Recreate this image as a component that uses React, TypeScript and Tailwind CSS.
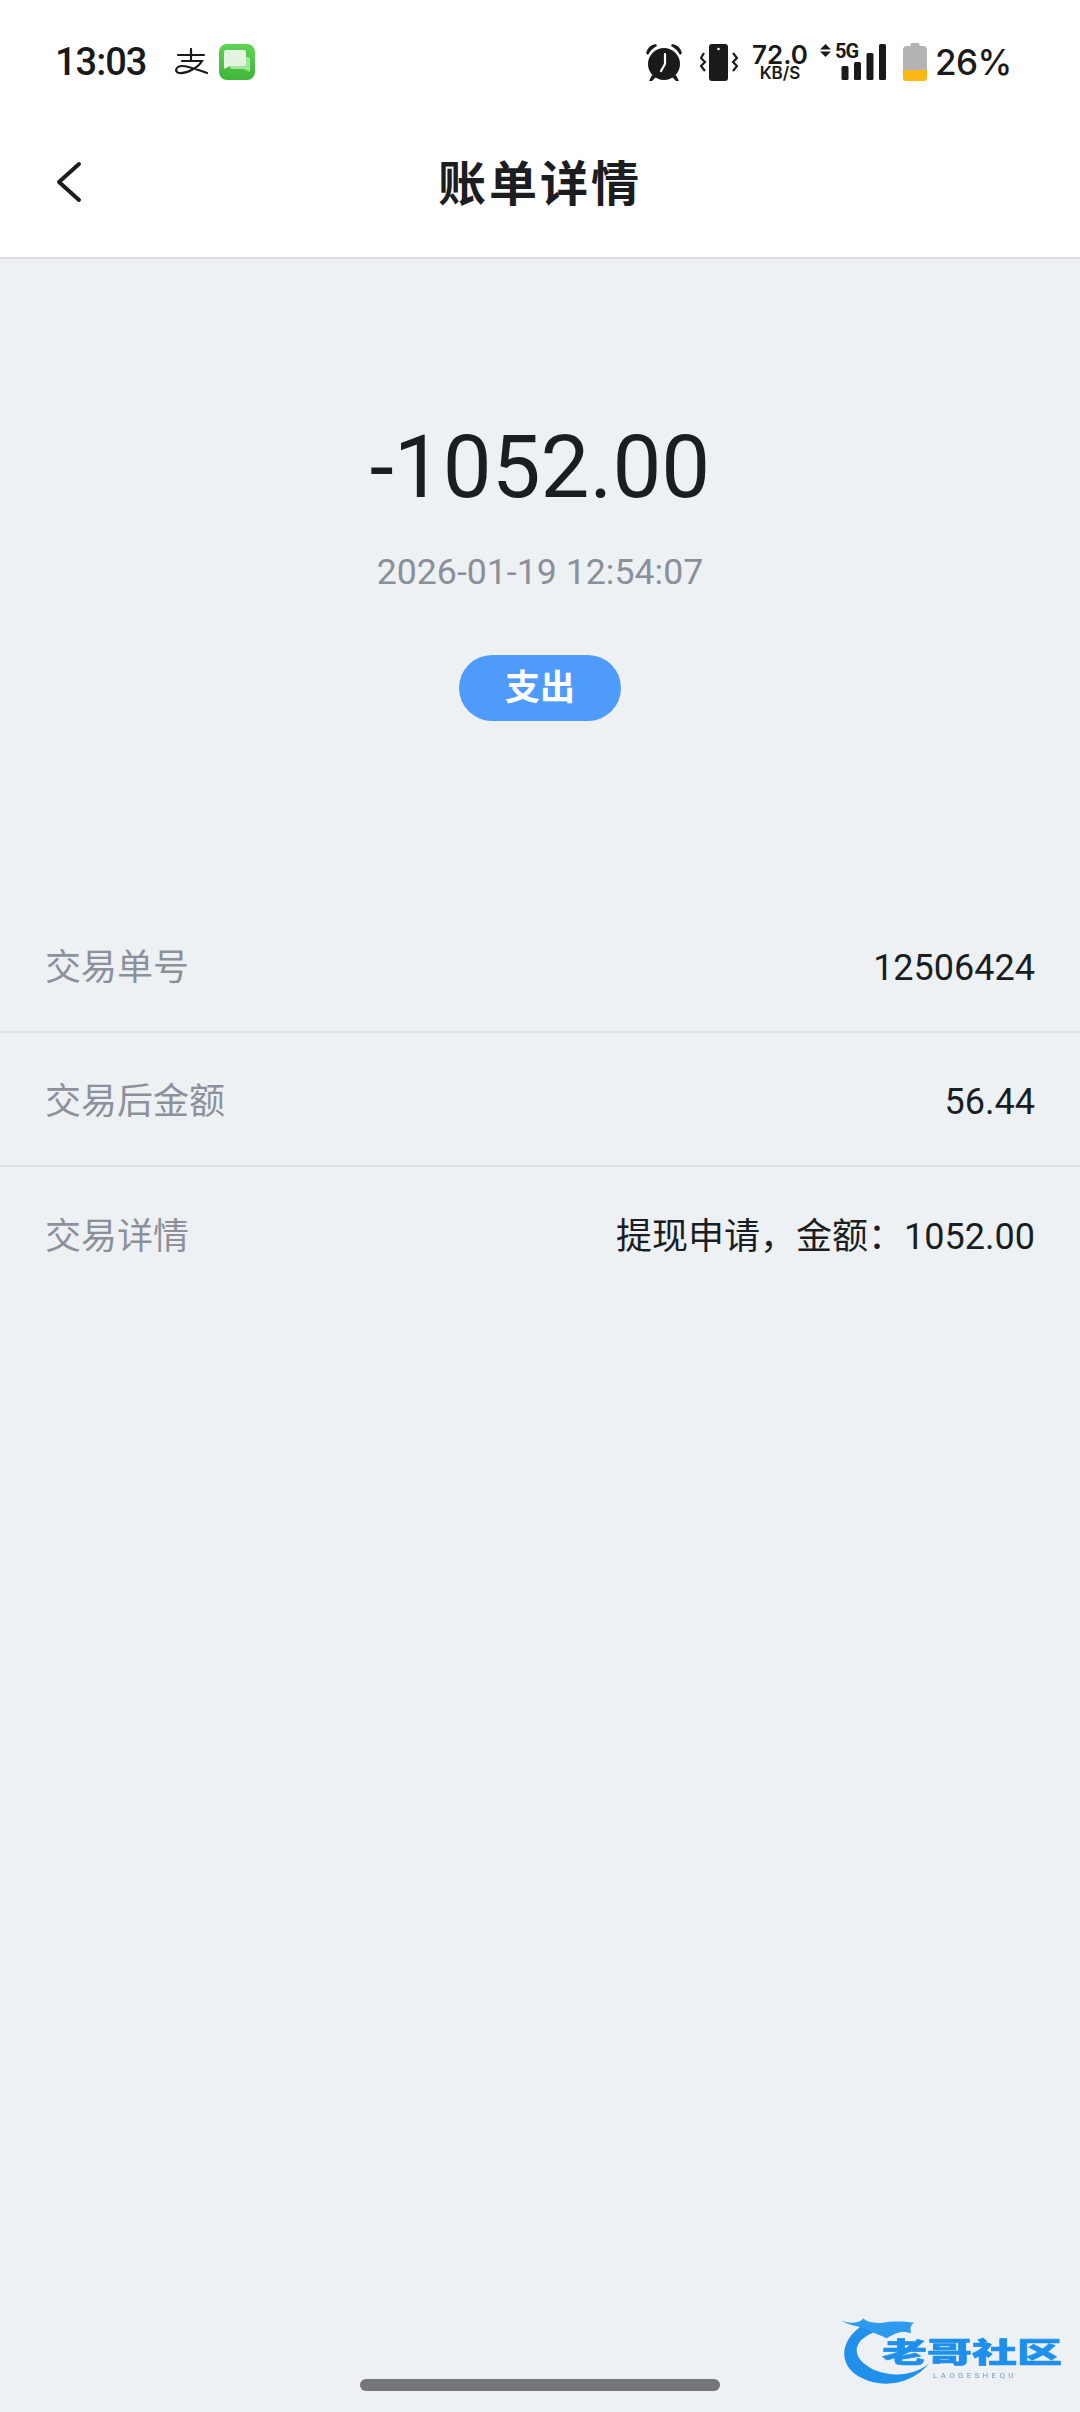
import React from 'react';

const rows = [
  { label: '交易单号', value: '12506424' },
  { label: '交易后金额', value: '56.44' },
  { label: '交易详情', value: '提现申请，金额：1052.00' },
];

function StatusBar() {
  return (
    <div className="h-[120px] pt-[4px] bg-white flex items-center justify-between pl-[55px] pr-[70px] text-[#1a1a1a] font-['Inter','Noto_Sans_CJK_SC',sans-serif]">
      <div className="flex items-center">
        <span className="w-[91px] whitespace-nowrap text-[38px] leading-none font-medium tracking-[-1px] font-['Roboto',sans-serif]">13:03</span>
        <svg width="36" height="28" viewBox="0 0 36 28" fill="none" stroke="#1a1a1a" strokeWidth="2.2" strokeLinecap="round" className="ml-[28px]">
          <path d="M4 7h26M17 1v12M8 13h20C24 20 12 26 5 25C0 24 2 18 8 18C15 18 24 22 33 25" />
        </svg>
        <svg width="36" height="36" viewBox="0 0 36 36" className="ml-[9px]">
          <defs>
            <linearGradient id="msg" x1="0" y1="0" x2="0" y2="1">
              <stop offset="0" stopColor="#5fd352" />
              <stop offset="1" stopColor="#3fb53a" />
            </linearGradient>
          </defs>
          <rect width="36" height="36" rx="8" fill="url(#msg)" />
          <path d="M13 13h16a2 2 0 0 1 2 2v13l-6-3H13a2 2 0 0 1-2-2v-8a2 2 0 0 1 2-2z" fill="#a4e39e" />
          <path d="M7 6h18a2 2 0 0 1 2 2v12a2 2 0 0 1-2 2H11l-6 3V8a2 2 0 0 1 2-2z" fill="#e3f5e1" />
        </svg>
      </div>
      <div className="flex items-center">
        <svg width="38" height="38" viewBox="0 0 38 38" fill="#1a1a1a">
          <circle cx="19" cy="21" r="16" />
          <path d="M1 10 Q3 2 11 1 L12 3 Q6 6 3 12 Z M37 10 Q35 2 27 1 L26 3 Q32 6 35 12 Z" />
          <path d="M7 32l-3 6h3l4-4z M31 32l3 6h-3l-4-4z" />
          <path d="M20 11v10l-4 7" fill="none" stroke="#fff" strokeWidth="2.2" strokeLinecap="round" />
        </svg>
        <svg width="38" height="38" viewBox="0 0 38 38" fill="#1a1a1a" className="ml-[17px]">
          <rect x="9" y="1" width="19" height="37" rx="3" />
          <circle cx="18.500" cy="6" r="1.300" fill="#fff" />
          <path d="M4 10L1 15l4 4-4 4 4 5M33 10l4 5-4 4 4 4-4 5" fill="none" stroke="#1a1a1a" strokeWidth="2.200" />
        </svg>
        <div className="ml-[14px] w-[56px] flex flex-col items-center font-semibold">
          <span className="text-[26px] leading-[22px]">72.0</span>
          <span className="text-[17px] leading-[14px]">KB/S</span>
        </div>
        <div className="ml-[12px] relative w-[67px] h-[36px]">
          <svg width="11" height="13" viewBox="0 0 11 13" fill="#1a1a1a" className="absolute left-0 top-0">
            <path d="M5.500 0l5.500 5.500H0zM5.500 13L0 7.500h11z" />
          </svg>
          <span className="absolute left-[15px] -top-[3px] text-[20px] leading-[20px] font-bold tracking-[-1px] font-['Roboto',sans-serif]">5G</span>
          <svg width="46" height="36" viewBox="0 0 46 36" fill="#1a1a1a" className="absolute right-0 top-0">
            <rect x="0.500" y="22" width="7" height="14" rx="1.500" />
            <rect x="13" y="18" width="7" height="18" rx="1.500" />
            <rect x="25.500" y="9" width="7" height="27" rx="1.500" />
            <rect x="38" y="0" width="7" height="36" rx="1.500" />
          </svg>
        </div>
        <svg width="24" height="38" viewBox="0 0 24 38" className="ml-[16px]">
          <path d="M9 0h6a1.500 1.500 0 0 1 1.500 1.500V3H20a4 4 0 0 1 4 4v27a4 4 0 0 1-4 4H4a4 4 0 0 1-4-4V7a4 4 0 0 1 4-4h3.500V1.500A1.500 1.500 0 0 1 9 0z" fill="#b3b3b3" />
          <path d="M0 27h24v7a4 4 0 0 1-4 4H4a4 4 0 0 1-4-4z" fill="#fbb714" />
        </svg>
        <span className="ml-[8px] w-[75px] whitespace-nowrap text-[35px] leading-none font-medium tracking-[-0.5px]">26%</span>
      </div>
    </div>
  );
}

function Header() {
  return (
    <div className="relative h-[139px] bg-white border-b-2 border-[#dcdfe2] flex items-center justify-center">
      <button className="absolute left-[50px] top-[38px]">
        <svg width="34" height="48" viewBox="0 0 34 48" fill="none" stroke="#1b1d20" strokeWidth="4" strokeLinecap="round" strokeLinejoin="round">
          <path d="M29 6L9 24l20 18" />
        </svg>
      </button>
      <h1 className="text-[48px] leading-none font-bold tracking-[3px] text-[#1b1d20] -mt-[8px]">账单详情</h1>
    </div>
  );
}

function Hero() {
  return (
    <div className="pt-[158px] flex flex-col items-center">
      <div className="text-[87px] leading-[100px] text-[#1a1e23]">-1052.00</div>
      <div className="mt-[30px] text-[35.700px] leading-[50px] text-[#8a8f99]">2026-01-19 12:54:07</div>
      <div className="mt-[58px] w-[162px] h-[66px] rounded-full bg-[#4e9bfb] flex items-center justify-center text-white text-[35px] font-bold">
        <span className="mt-[2px]">支出</span>
      </div>
    </div>
  );
}

function Logo() {
  return (
    <div className="absolute right-0 bottom-0 w-[300px] h-[132px]">
      <svg width="300" height="132" viewBox="0 0 900 396" className="absolute inset-0 blur-[0.5px]">
        <path d="M250 135C190 170 170 240 225 282C285 325 385 325 448 250C400 292 310 295 258 255C212 222 225 178 280 158Z" fill="#2090ea" />
        <path d="M185 122C215 132 240 130 250 115C262 128 285 130 310 128C340 122 375 125 402 128C385 140 395 150 392 160C365 150 345 160 320 175C300 165 280 160 260 148C235 138 205 135 185 122Z" fill="#2f9bee" />
      </svg>
      <div className="absolute left-[102px] top-[50px] text-[45px] leading-[48px] whitespace-nowrap font-black text-[#1f8fec] scale-y-[0.62] [-webkit-text-stroke:1px_#1f8fec] blur-[0.4px]">老哥社区</div>
      <div className="absolute left-[153px] top-[91px] text-[8px] leading-[10px] tracking-[3.300px] whitespace-nowrap text-[#6f9cc4] blur-[0.3px]">LAOGESHEQU</div>
    </div>
  );
}

export default function App() {
  return (
    <div className="relative w-[1080px] h-[2412px] overflow-hidden bg-[#edf1f4] font-['Roboto','Noto_Sans_CJK_SC',sans-serif]">
      <StatusBar />
      <Header />
      <Hero />
      <div className="mt-[178px]">
        {rows.map((r, i) => (
          <div key={r.label} className={`h-[134px] pt-[6px] flex items-center justify-between px-[45px] text-[36px] ${i < 2 ? 'border-b-2 border-[#dfe3e8]' : ''}`}>
            <span className="text-[#8c909b]">{r.label}</span>
            <span className="text-[#1a1e23]">{r.value}</span>
          </div>
        ))}
      </div>
      <div className="absolute left-[360px] bottom-[21px] w-[360px] h-[12px] rounded-full bg-[#757678]" />
      <Logo />
    </div>
  );
}
